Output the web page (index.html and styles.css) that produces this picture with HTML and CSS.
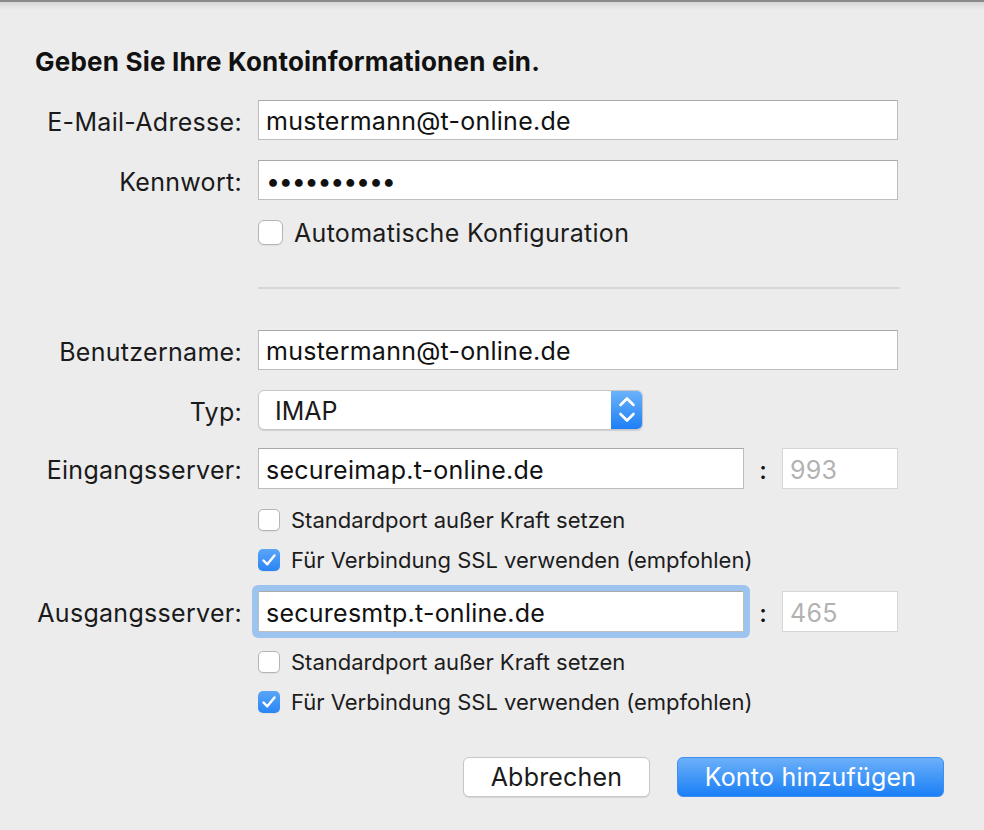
FILE: index.html
```html
<!DOCTYPE html>
<html lang="de">
<head>
<meta charset="utf-8">
<title>Konto hinzufügen</title>
<link rel="stylesheet" href="styles.css">
</head>
<body>
<div class="sheet">
  <div class="topedge"></div>
  <h1 class="title">Geben Sie Ihre Kontoinformationen ein.</h1>
  <div class="form">
    <div class="row mt23">
      <div class="lbl">E-Mail-Adresse:</div>
      <div class="field wide">mustermann@t-online.de</div>
    </div>
    <div class="row mt20">
      <div class="lbl">Kennwort:</div>
      <div class="field wide pw">••••••••••</div>
    </div>
    <div class="row mt20">
      <div class="check big wide"><span class="box"></span><span>Automatische Konfiguration</span></div>
    </div>
    <div class="row mt42">
      <div class="sep wide"></div>
    </div>
    <div class="row mt41">
      <div class="lbl">Benutzername:</div>
      <div class="field wide">mustermann@t-online.de</div>
    </div>
    <div class="row mt20">
      <div class="lbl">Typ:</div>
      <div class="select">
        <span class="sel-text">IMAP</span>
        <span class="sel-arrows">
          <svg width="32" height="40" viewBox="0 0 32 40"><path d="M9.5 15 L16 8.5 L22.5 15 M9.5 24 L16 30.5 L22.5 24" fill="none" stroke="#fff" stroke-width="2.6" stroke-linecap="round" stroke-linejoin="round"/></svg>
        </span>
      </div>
    </div>
    <div class="row mt18">
      <div class="lbl">Eingangsserver:</div>
      <div class="field server">secureimap.t-online.de</div>
      <div class="colon">:</div>
      <div class="field port">993</div>
    </div>
    <div class="row mt20">
      <div class="check wide"><span class="box"></span><span>Standardport außer Kraft setzen</span></div>
    </div>
    <div class="row mt18">
      <div class="check wide"><span class="box on"><svg width="22" height="22" viewBox="0 0 22 22"><path d="M5.5 11.5 L9.3 15.3 L16.5 6.5" fill="none" stroke="#fff" stroke-width="2.4" stroke-linecap="round" stroke-linejoin="round"/></svg></span><span>Für Verbindung SSL verwenden (empfohlen)</span></div>
    </div>
    <div class="row mt20">
      <div class="lbl">Ausgangsserver:</div>
      <div class="field server focus">securesmtp.t-online.de</div>
      <div class="colon">:</div>
      <div class="field port">465</div>
    </div>
    <div class="row mt19">
      <div class="check wide"><span class="box"></span><span>Standardport außer Kraft setzen</span></div>
    </div>
    <div class="row mt18">
      <div class="check wide"><span class="box on"><svg width="22" height="22" viewBox="0 0 22 22"><path d="M5.5 11.5 L9.3 15.3 L16.5 6.5" fill="none" stroke="#fff" stroke-width="2.4" stroke-linecap="round" stroke-linejoin="round"/></svg></span><span>Für Verbindung SSL verwenden (empfohlen)</span></div>
    </div>
  </div>
  <div class="buttons">
    <button class="btn cancel">Abbrechen</button>
    <button class="btn primary">Konto hinzufügen</button>
  </div>
</div>
</body>
</html>
```

FILE: styles.css
```css
* { box-sizing: border-box; }
html, body {
  margin: 0;
  padding: 0;
  background: #ececec;
}
body {
  width: 984px;
  height: 830px;
  overflow: hidden;
  font-family: "Inter", "Liberation Sans", sans-serif;
  color: #1c1c1c;
}
.sheet {
  position: relative;
  height: 830px;
}
.topedge {
  height: 10px;
  border-top: 2px solid #8a8a8a;
  background: linear-gradient(#d6d6d6, #ececec);
}
.title {
  margin: 36px 0 0 35px;
  font-size: 26px;
  line-height: 32px;
  font-weight: 700;
  letter-spacing: 0.2px;
  color: #111;
}
.form {
  display: flex;
  flex-direction: column;
  margin-top: -1px;
}
.row {
  display: grid;
  grid-template-columns: 258px 486px 38px 116px;
  align-items: center;
}
.mt18 { margin-top: 18px; }
.mt19 { margin-top: 19px; }
.mt20 { margin-top: 20px; }
.mt23 { margin-top: 23px; }
.mt41 { margin-top: 41px; }
.mt42 { margin-top: 42px; }
.lbl {
  grid-column: 1;
  text-align: right;
  padding-right: 16px;
  padding-top: 3px;
  font-size: 25px;
  letter-spacing: 0.3px;
  color: #1a1a1a;
}
.wide { grid-column: 2 / 5; }
.field {
  height: 40px;
  background: #fff;
  border: 1px solid #bdbdbd;
  border-top-color: #a9a9a9;
  padding-left: 7px;
  padding-top: 2px;
  font-size: 25px;
  line-height: 37px;
  letter-spacing: 0.25px;
  color: #111;
  white-space: nowrap;
}
.field.pw {
  font-size: 25px;
  letter-spacing: -1.2px;
}
.field.server {
  grid-column: 2;
  height: 41px;
  line-height: 38px;
}
.field.port {
  grid-column: 4;
  height: 41px;
  line-height: 38px;
  color: #b2b2b2;
  border-color: #d6d6d6;
}
.field.focus {
  border-radius: 2px;
  box-shadow: 0 0 0 6px #9dc3ef;
}
.colon {
  grid-column: 3;
  text-align: center;
  padding-top: 3px;
  font-size: 25px;
  font-weight: 500;
  color: #111;
}
.check {
  display: flex;
  align-items: center;
  gap: 11px;
  font-size: 22px;
  color: #1c1c1c;
  height: 22px;
}
.check .box {
  width: 22px;
  height: 22px;
  flex: none;
  background: #fff;
  border: 1px solid #b4b4b4;
  border-radius: 5px;
  box-shadow: 0 1px 1px rgba(0,0,0,0.06);
}
.check .box.on {
  border: none;
  background: linear-gradient(#5aa5f8, #2a85f5);
}
.check .box svg { display: block; }
.check.big {
  height: 25px;
  font-size: 25px;
  letter-spacing: 0.3px;
}
.check.big .box {
  width: 25px;
  height: 25px;
  border-radius: 6px;
}
.sep {
  height: 2px;
  background: #d7d7d7;
  margin-right: -2px;
}
.select {
  grid-column: 2 / 4;
  width: 385px;
  height: 40px;
  display: flex;
  background: #fff;
  border: 1px solid #c6c6c6;
  border-radius: 6px;
  box-shadow: 0 1px 1px rgba(0,0,0,0.12);
  overflow: hidden;
}
.sel-text {
  flex: 1;
  padding-left: 16px;
  padding-top: 2px;
  font-size: 25px;
  line-height: 36px;
  color: #1a1a1a;
}
.sel-arrows {
  width: 32px;
  margin: -1px -1px -1px 0;
  background: linear-gradient(#6db4fa, #1b7ef6);
}
.sel-arrows svg { display: block; }
.buttons {
  display: flex;
  justify-content: flex-end;
  gap: 27px;
  margin-top: 44px;
  padding-right: 40px;
}
.btn {
  height: 40px;
  font-family: "Inter", "Liberation Sans", sans-serif;
  font-size: 25px;
  letter-spacing: 0.2px;
  border-radius: 6px;
  padding: 0;
}
.btn.cancel {
  width: 187px;
  background: #fff;
  border: 1px solid #c8c8c8;
  color: #1a1a1a;
  box-shadow: 0 1px 1px rgba(0,0,0,0.1);
}
.btn.primary {
  width: 267px;
  border: 1px solid #3d8ff3;
  color: #fff;
  background: linear-gradient(#6cb0f9, #1a7ff6);
}
```
